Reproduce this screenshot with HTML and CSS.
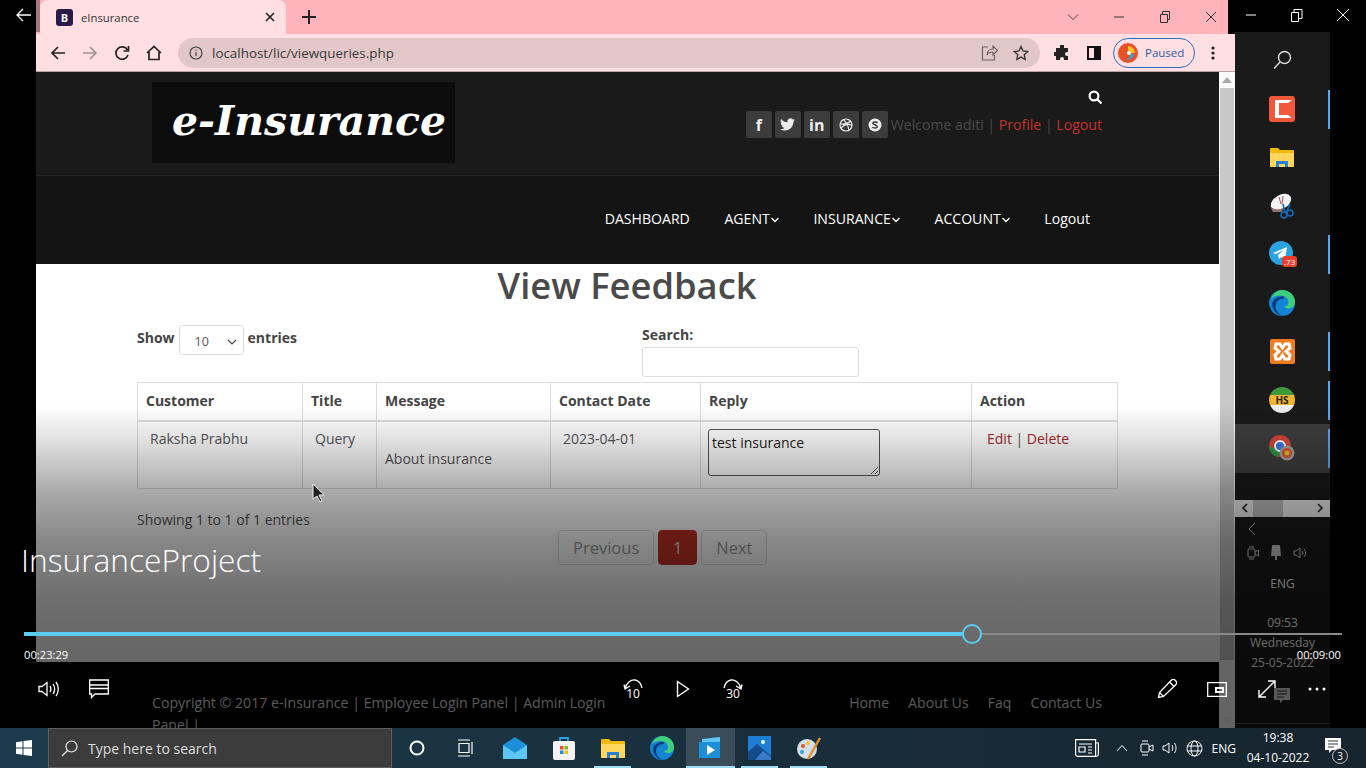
FILE: index.html
```html
<!DOCTYPE html>
<html lang="en">

<head>
    <meta charset="UTF-8">
    <meta name="viewport" content="width=device-width, initial-scale=1.0">
    <title>eInsurance</title>
    <link rel="stylesheet" href="styles.css">
</head>

<body>
    <svg class="defs" width="0" height="0">
        <symbol id="folder" viewBox="0 0 24 20">
            <path fill="#f2b90f" d="M0 2a1 1 0 0 1 1-1h7l2 2h13a1 1 0 0 1 1 1v15a1 1 0 0 1-1 1H1a1 1 0 0 1-1-1z" />
            <path fill="#ffd75e" d="M0 6h24v13a1 1 0 0 1-1 1H1a1 1 0 0 1-1-1z" />
            <path fill="#2a80d2" d="M6 14h12v6h-3v-3H9v3H6z" />
        </symbol>
        <symbol id="edge" viewBox="0 0 24 24">
            <circle cx="12" cy="12" r="12" fill="#1383d4" />
            <path fill="#3fcf7c" d="M2 8C4 2 9 0 12 0c7 0 12 5 12 11 0 4-3 6-6 6-2 0-4-1-4-2 3 0 4-2 4-4 0-3-3-6-7-6-4 0-7 1-9 3z" />
            <path fill="#0c3a78" d="M13 8c-4 0-7 3-7 7 0 4 3 8 8 9-5 0-11-4-11-11 0-3 4-7 9-7 2 0 3 1 1 2z" />
        </symbol>
    </svg>

    <div class="screen">
        <div class="desktop">
            <div class="gutter">
                <svg class="ico" width="16" height="16" viewBox="0 0 16 16" fill="none" stroke="#fff" stroke-width="1.3">
                    <path d="M15 8H1M7 2 1 8l6 6" />
                </svg>
            </div>

            <div class="browser">
                <div class="tabstrip">
                    <div class="tab-edge"></div>
                    <div class="tab">
                        <span class="favicon">B</span>
                        <span class="tab-title">eInsurance</span>
                        <svg class="tab-close" width="10" height="10" viewBox="0 0 10 10" stroke="#222" stroke-width="1.6">
                            <path d="M1 1l8 8M9 1 1 9" />
                        </svg>
                    </div>
                    <svg class="tab-new" width="14" height="14" viewBox="0 0 14 14" stroke="#222" stroke-width="2">
                        <path d="M7 0v14M0 7h14" />
                    </svg>
                    <div class="win-btns">
                        <svg class="win-btn" width="12" height="12" viewBox="0 0 12 12" fill="none" stroke="#444">
                            <path d="M1 3.5 6 8.5l5-5" />
                        </svg>
                        <svg class="win-btn" width="12" height="12" viewBox="0 0 12 12" stroke="#333">
                            <path d="M1 6h10" />
                        </svg>
                        <svg class="win-btn" width="12" height="12" viewBox="0 0 12 12" fill="none" stroke="#333">
                            <path d="M1.5 3.5h7v8h-7zM3.5 3.5v-3h7v8h-2" />
                        </svg>
                        <svg class="win-btn" width="12" height="12" viewBox="0 0 12 12" stroke="#333">
                            <path d="M1 1l10 10M11 1 1 11" />
                        </svg>
                    </div>
                </div>

                <div class="toolbar">
                    <div class="tool">
                        <svg width="16" height="16" viewBox="0 0 16 16" fill="none" stroke="#222" stroke-width="1.7">
                            <path d="M15 8H2M8 2 2 8l6 6" />
                        </svg>
                    </div>
                    <div class="tool">
                        <svg width="16" height="16" viewBox="0 0 16 16" fill="none" stroke="#a88f91" stroke-width="1.7">
                            <path d="M1 8h13M8 2l6 6-6 6" />
                        </svg>
                    </div>
                    <div class="tool">
                        <svg width="16" height="16" viewBox="0 0 16 16" fill="none" stroke="#222" stroke-width="1.7">
                            <path d="M13.5 5A6.2 6.2 0 1 0 14 10" />
                            <path d="M14.5 1v5h-5" />
                        </svg>
                    </div>
                    <div class="tool">
                        <svg width="16" height="16" viewBox="0 0 16 16" fill="none" stroke="#222" stroke-width="1.7">
                            <path d="M1 8l7-6.5L15 8M3 7v7.5h10V7" />
                        </svg>
                    </div>
                    <div class="omnibox">
                        <svg width="14" height="14" viewBox="0 0 14 14" fill="none" stroke="#444" stroke-width="1.2">
                            <circle cx="7" cy="7" r="6" />
                            <path d="M7 6v4.2M7 3.5v1.3" />
                        </svg>
                        <span class="url">localhost/lic/viewqueries.php</span>
                        <svg class="omni-share" width="17" height="17" viewBox="0 0 17 17" fill="none" stroke="#6f6365" stroke-width="1.2">
                            <path d="M7 3H1.5v13h12v-5M6 11c0-4 3-6 6-6V2l4.500 4.500L12 11V8c-3 0-5 1-6 3z" />
                        </svg>
                        <svg width="16" height="16" viewBox="0 0 16 16" fill="none" stroke="#333" stroke-width="1.3">
                            <path d="M8 1.500l2 4.500 4.800.5-3.600 3.200 1 4.800L8 12.100 3.800 14.500l1-4.800L1.200 6.500 6 6z" />
                        </svg>
                    </div>
                    <div class="tool tool-ext">
                        <svg width="16" height="16" viewBox="0 0 16 16" fill="#222">
                            <path d="M6 1a2 2 0 0 1 4 0v2h4v4h-1a2 2 0 0 0 0 4h1v4h-4v-1a2 2 0 0 0-4 0v1H2v-4H1a2 2 0 0 1 0-4h1V3h4z" />
                        </svg>
                    </div>
                    <div class="tool">
                        <svg width="14" height="14" viewBox="0 0 14 14">
                            <path fill-rule="evenodd" fill="#111" d="M0 0h14v14H0zM2 2v10h5V2z" />
                        </svg>
                    </div>
                    <div class="profile">
                        <svg width="20" height="20" viewBox="0 0 20 20">
                            <circle cx="10" cy="10" r="10" fill="#e8502a" />
                            <path fill="#f7c325" d="M10 3a7 7 0 0 1 7 7h-5a2 2 0 0 0-2-2z" />
                            <path fill="#35a0d8" d="M12 11a4 4 0 0 1-5 5c3 2 8 0 9-5z" />
                            <circle cx="11" cy="10" r="2" fill="#fff" />
                        </svg>
                        <span>Paused</span>
                    </div>
                    <div class="tool tool-menu">
                        <svg width="4" height="14" viewBox="0 0 4 14" fill="#222">
                            <circle cx="2" cy="2" r="1.600" />
                            <circle cx="2" cy="7" r="1.600" />
                            <circle cx="2" cy="12" r="1.600" />
                        </svg>
                    </div>
                </div>

                <div class="viewport">
                    <div class="page">
                        <header class="site-top">
                            <div class="logo">e-Insurance</div>
                            <div class="top-right">
                                <svg class="top-search" width="14" height="14" viewBox="0 0 14 14" fill="none" stroke="#fff" stroke-width="2.200">
                                    <circle cx="6" cy="6" r="4.400" />
                                    <path d="M9 9l4.500 4.500" />
                                </svg>
                                <div class="top-links">
                                    <span class="social"><b>f</b></span>
                                    <span class="social">
                                        <svg width="15" height="15" viewBox="0 0 24 24" fill="#eee">
                                            <path d="M23.953 4.570a10 10 0 01-2.825.775 4.958 4.958 0 002.163-2.723c-.951.555-2.005.959-3.127 1.184a4.920 4.920 0 00-8.384 4.482C7.690 8.095 4.067 6.130 1.640 3.162a4.822 4.822 0 00-.666 2.475c0 1.710.870 3.213 2.188 4.096a4.904 4.904 0 01-2.228-.616v.060a4.923 4.923 0 003.946 4.827 4.996 4.996 0 01-2.212.085 4.936 4.936 0 004.604 3.417 9.867 9.867 0 01-6.102 2.105c-.390 0-.779-.023-1.170-.067a13.995 13.995 0 007.557 2.209c9.053 0 13.998-7.496 13.998-13.985 0-.210 0-.420-.015-.630A9.935 9.935 0 0024 4.590z" />
                                        </svg>
                                    </span>
                                    <span class="social"><b>in</b></span>
                                    <span class="social">
                                        <svg width="14" height="14" viewBox="0 0 14 14" fill="none" stroke="#eee" stroke-width="1.200">
                                            <circle cx="7" cy="7" r="6" />
                                            <path d="M4.500 1.600c3 3 5 7 5.500 10.800M1.200 6c4 .3 8-.6 10.300-3M2 10.500c2-3 6-5 11-3.500" />
                                        </svg>
                                    </span>
                                    <span class="social">
                                        <svg width="14" height="14" viewBox="0 0 14 14">
                                            <circle cx="7" cy="7" r="6.500" fill="#eee" />
                                            <path d="M9.500 5C9 3.800 5 3.500 4.800 5.200 4.700 7 9.500 6.600 9.300 8.800 9 10.500 5 10.300 4.300 9" fill="none" stroke="#333" stroke-width="1.400" />
                                        </svg>
                                    </span>
                                    <span class="welcome">Welcome aditi | <a class="red">Profile</a> | <a class="red">Logout</a></span>
                                </div>
                            </div>
                        </header>

                        <nav class="site-nav">
                            <a>DASHBOARD</a>
                            <a>AGENT<svg class="caret" width="8" height="6" viewBox="0 0 8 6" fill="none" stroke="#fff" stroke-width="1.300"><path d="M.5 1 4 4.500 7.500 1" /></svg></a>
                            <a>INSURANCE<svg class="caret" width="8" height="6" viewBox="0 0 8 6" fill="none" stroke="#fff" stroke-width="1.300"><path d="M.5 1 4 4.500 7.500 1" /></svg></a>
                            <a>ACCOUNT<svg class="caret" width="8" height="6" viewBox="0 0 8 6" fill="none" stroke="#fff" stroke-width="1.300"><path d="M.5 1 4 4.500 7.500 1" /></svg></a>
                            <a>Logout</a>
                        </nav>

                        <main class="content">
                            <h1>View Feedback</h1>
                            <div class="dt-top">
                                <label class="dt-length">Show
                                    <span class="fake-select">10
                                        <svg width="10" height="6" viewBox="0 0 10 6" fill="none" stroke="#444" stroke-width="1.200"><path d="M1 1l4 4 4-4" /></svg>
                                    </span>
                                    entries</label>
                                <label class="dt-search">Search:
                                    <input type="text">
                                </label>
                            </div>

                            <table class="dt">
                                <colgroup>
                                    <col class="c-customer">
                                    <col class="c-title">
                                    <col class="c-message">
                                    <col class="c-date">
                                    <col class="c-reply">
                                    <col class="c-action">
                                </colgroup>
                                <thead>
                                    <tr>
                                        <th>Customer</th>
                                        <th>Title</th>
                                        <th>Message</th>
                                        <th>Contact Date</th>
                                        <th>Reply</th>
                                        <th>Action</th>
                                    </tr>
                                </thead>
                                <tbody>
                                    <tr>
                                        <td>Raksha Prabhu</td>
                                        <td>Query</td>
                                        <td class="td-msg"><br>About insurance</td>
                                        <td>2023-04-01</td>
                                        <td class="td-reply"><textarea>test insurance</textarea></td>
                                        <td class="td-action"><a class="red">Edit</a> | <a class="red">Delete</a></td>
                                    </tr>
                                </tbody>
                            </table>

                            <div class="dt-info">Showing 1 to 1 of 1 entries</div>
                            <div class="pager">
                                <span class="pg">Previous</span>
                                <span class="pg pg-on">1</span>
                                <span class="pg">Next</span>
                            </div>
                        </main>

                        <footer class="site-foot">
                            <div class="copy">Copyright © 2017 e-Insurance | Employee Login Panel | Admin Login Panel |</div>
                            <div class="foot-links">
                                <a>Home</a>
                                <a>About Us</a>
                                <a>Faq</a>
                                <a>Contact Us</a>
                            </div>
                        </footer>
                    </div>

                    <div class="scrollbar">
                        <div class="sb-btn">
                            <svg width="10" height="6" viewBox="0 0 10 6" fill="#a8a8a8"><path d="M5 0l5 6H0z" /></svg>
                        </div>
                        <div class="sb-thumb"></div>
                        <div class="sb-track"></div>
                        <div class="sb-btn">
                            <svg width="10" height="6" viewBox="0 0 10 6" fill="#eee"><path d="M5 6 0 0h10z" /></svg>
                        </div>
                    </div>
                </div>
            </div>

            <div class="side">
                <div class="side-top">
                    <svg class="side-btn" width="14" height="14" viewBox="0 0 14 14" stroke="#fff"><path d="M2 7h10" /></svg>
                    <svg class="side-btn" width="14" height="14" viewBox="0 0 14 14" fill="none" stroke="#fff"><path d="M1.500 4.500h7v9h-7zM4 4.500v-3h8v9H8.500" /></svg>
                    <svg class="side-btn" width="14" height="14" viewBox="0 0 14 14" stroke="#fff"><path d="M1 1l12 12M13 1 1 13" /></svg>
                </div>
                <div class="panel">
                    <div class="app">
                        <svg width="20" height="20" viewBox="0 0 20 20" fill="none" stroke="#ddd" stroke-width="1.400">
                            <circle cx="12.500" cy="7.500" r="6" />
                            <path d="M8 12l-6 6.500" />
                        </svg>
                    </div>
                    <div class="app app-open">
                        <svg width="26" height="26" viewBox="0 0 26 26">
                            <rect width="26" height="26" rx="3" fill="#f2573b" />
                            <path fill="#fff" d="M6 4h17l-4 3h-9v12h9l4 3H6z" />
                        </svg>
                    </div>
                    <div class="app"><svg width="24" height="20"><use href="#folder" /></svg></div>
                    <div class="app">
                        <svg width="24" height="26" viewBox="0 0 24 26">
                            <ellipse cx="11" cy="9" rx="11" ry="7" fill="#f3f3f3" transform="rotate(-30 11 9)" />
                            <path d="M0 13c3 4 9 4 13 2l-1 4H3z" fill="#8a7474" />
                            <path d="M9 4l2 7M13 3l-1 8" stroke="#b05050" />
                            <path d="M13 11l2 9M20 11l-4 9" stroke="#0f6cc0" stroke-width="1.600" />
                            <circle cx="14" cy="22" r="3" fill="none" stroke="#0f6cc0" stroke-width="1.600" />
                            <circle cx="20" cy="20" r="3" fill="none" stroke="#0f6cc0" stroke-width="1.600" />
                        </svg>
                    </div>
                    <div class="app app-open">
                        <svg width="26" height="26" viewBox="0 0 26 26">
                            <circle cx="12" cy="12" r="12" fill="#2aa3e0" />
                            <path fill="#fff" d="M4 12l14-6-2 13-4-3-2 2-1-4 6-5-8 4z" />
                        </svg>
                        <span class="count">.73</span>
                    </div>
                    <div class="app"><svg width="26" height="26"><use href="#edge" /></svg></div>
                    <div class="app app-open">
                        <svg width="25" height="25" viewBox="0 0 25 25">
                            <rect width="25" height="25" rx="2" fill="#ee7d22" />
                            <path fill="none" stroke="#fff" stroke-width="3" d="M6 5h4l2.500 4L15 5h4l1 4-4 3.500 4 3.500-1 4h-4l-2.500-4-2.500 4H6l-1-4 4-3.500L5 9z" />
                        </svg>
                    </div>
                    <div class="app app-open">
                        <span class="hs">HS</span>
                    </div>
                    <div class="app app-open app-active">
                        <svg width="26" height="26" viewBox="0 0 26 26">
                            <circle cx="11" cy="11" r="11" fill="#d8453a" />
                            <path fill="#2c9a4b" d="M0 11a11 11 0 0 0 9 11l4-8H6z" />
                            <circle cx="11" cy="11" r="5" fill="#3b78e0" stroke="#fff" stroke-width="2" />
                            <circle cx="18" cy="18" r="7.500" fill="#a9a29e" />
                            <circle cx="18" cy="18" r="5" fill="#d8553a" />
                            <circle cx="18" cy="18" r="2.500" fill="#e7c12f" />
                        </svg>
                    </div>
                    <div class="panel-gap"></div>
                    <div class="panel-scroll">
                        <svg width="7" height="10" viewBox="0 0 7 10" fill="none" stroke="#222" stroke-width="1.600"><path d="M6 1 2 5l4 4" /></svg>
                        <div class="panel-thumb"></div>
                        <svg class="panel-next" width="7" height="10" viewBox="0 0 7 10" fill="none" stroke="#222" stroke-width="1.600"><path d="M1 1l4 4-4 4" /></svg>
                    </div>
                    <div class="sys">
                        <svg class="sys-back" width="8" height="14" viewBox="0 0 8 14" fill="none" stroke="#ccc"><path d="M7 1 1 7l6 6" /></svg>
                        <div class="sys-icons">
                            <svg width="12" height="16" viewBox="0 0 12 16" fill="none" stroke="#ccc"><rect x="1" y="4" width="7" height="8" rx="1" /><path d="M8 7l3.500-2v6L8 9M2 2h5M2 14h5" /></svg>
                            <svg width="12" height="15" viewBox="0 0 12 15" fill="#ccc"><path d="M3 0h6a1 1 0 0 1 1 1l1 10H1L2 1a1 1 0 0 1 1-1zM5 11h2v4H5z" /></svg>
                            <svg width="15" height="14" viewBox="0 0 15 14" fill="none" stroke="#ccc"><path d="M1 5v4h2l4 3V2L3 5zM9 5c1 1 1 3 0 4M11 3c2 2 2 6 0 8" /></svg>
                        </div>
                        <div class="sys-eng">ENG</div>
                        <div class="sys-time">09:53</div>
                        <div class="sys-day">Wednesday</div>
                        <div class="sys-day">25-05-2022</div>
                        <svg class="sys-note" width="18" height="18" viewBox="0 0 18 18">
                            <path fill="#ddd" d="M0 0h16v12H9l-3 3v-3H0z" />
                            <path stroke="#333" d="M3 3h10M3 6h10M3 9h7" />
                        </svg>
                        <div class="sys-line"></div>
                    </div>
                </div>
            </div>
        </div>

        <div class="taskbar">
            <div class="start">
                <svg width="16" height="16" viewBox="0 0 16 16" fill="#fff">
                    <path d="M0 2.200 6.500 1.300v6.200H0zM7.500 1.100 16 0v7.500H7.500zM0 8.500h6.500v6.200L0 13.800zM7.500 8.500H16V16l-8.500-1.100z" />
                </svg>
            </div>
            <div class="task-search">
                <svg width="17" height="17" viewBox="0 0 17 17" fill="none" stroke="#eee" stroke-width="1.200">
                    <circle cx="10.500" cy="6.500" r="5.500" />
                    <path d="M6.500 10.500 1 16" />
                </svg>
                <span>Type here to search</span>
            </div>
            <div class="task-icons">
                <div class="task-ico">
                    <svg width="16" height="16" viewBox="0 0 16 16" fill="none" stroke="#fff" stroke-width="2"><circle cx="8" cy="8" r="6.500" /></svg>
                </div>
                <div class="task-ico">
                    <svg width="18" height="18" viewBox="0 0 18 18" fill="none" stroke="#fff" stroke-width="1.200">
                        <path d="M1 1h12M1 17h12M2 4.500h10v9H2zM15 3v12" />
                    </svg>
                </div>
                <div class="task-ico">
                    <svg width="24" height="22" viewBox="0 0 24 22">
                        <path fill="#1c8fd8" d="M0 8l12-8 12 8v14H0z" />
                        <path fill="#5cc6f5" d="M0 8l12 8 12-8v14H0z" />
                    </svg>
                </div>
                <div class="task-ico">
                    <svg width="22" height="24" viewBox="0 0 22 24">
                        <path fill="none" stroke="#2aa3e0" stroke-width="1.800" d="M7 6V2h8v4" />
                        <rect y="5" width="22" height="19" rx="2" fill="#f3f3f3" />
                        <path fill="#e8502a" d="M7 10h3.500v3.500H7z" />
                        <path fill="#7db922" d="M11.500 10H15v3.500h-3.500z" />
                        <path fill="#1c8fd8" d="M7 14.500h3.500V18H7z" />
                        <path fill="#f7b90f" d="M11.500 14.500H15V18h-3.500z" />
                    </svg>
                </div>
                <div class="task-ico task-run"><svg width="24" height="20"><use href="#folder" /></svg></div>
                <div class="task-ico"><svg width="24" height="24"><use href="#edge" /></svg></div>
                <div class="task-ico task-run task-cur">
                    <svg width="24" height="24" viewBox="0 0 24 24">
                        <path fill="#1c8fd8" d="M0 6h21v16H0z" />
                        <path fill="#5cc6f5" d="M3 3l18-2v5H3z" />
                        <path fill="#fff" d="M8 9l8 5-8 5z" />
                    </svg>
                </div>
                <div class="task-ico task-run">
                    <svg width="23" height="24" viewBox="0 0 23 24">
                        <rect width="23" height="24" fill="#1e7fd2" />
                        <path fill="#154a8c" d="M0 24V16l9-8 14 12v4z" />
                        <path fill="#3a7ac8" d="M7 24 15 15l8 6v3z" />
                        <circle cx="15" cy="6" r="2" fill="#dff" />
                    </svg>
                </div>
                <div class="task-ico task-run">
                    <svg width="26" height="26" viewBox="0 0 26 26">
                        <ellipse cx="11" cy="14" rx="10" ry="10" fill="#d5dfe8" />
                        <circle cx="7" cy="11" r="2" fill="#e8502a" />
                        <circle cx="12" cy="8" r="2" fill="#f7c325" />
                        <circle cx="6" cy="17" r="2" fill="#2aa3e0" />
                        <path stroke="#e0902a" stroke-width="2.400" d="M12 24 24 3" />
                    </svg>
                </div>
            </div>
            <div class="tray">
                <svg class="tray-news" width="24" height="18" viewBox="0 0 24 18" fill="none" stroke="#fff" stroke-width="1.200">
                    <path d="M.6.600h20v16.800H3a2.400 2.400 0 0 1-2.400-2.400zM21 4h2.400v11a2.400 2.400 0 0 1-2.400 2.400" />
                    <path d="M4 5h13M4 8h6v5H4zM13 8h4M13 11h4M13 14h4" />
                </svg>
                <svg class="tray-up" width="12" height="8" viewBox="0 0 12 8" fill="none" stroke="#fff"><path d="M1 7l5-5.500L11 7" /></svg>
                <svg class="tray-meet" width="14" height="18" viewBox="0 0 14 18" fill="none" stroke="#fff"><rect x="1" y="5" width="8" height="8" rx="1" /><path d="M9 8l4-2v6l-4-2M2 2h6M2 16h6" /></svg>
                <svg class="tray-i" width="17" height="16" viewBox="0 0 17 16" fill="none" stroke="#fff"><path d="M1 6v4h2l4 3V3L3 6zM10 5c1 2 1 4 0 6M12.500 3c2 3 2 7 0 10" /></svg>
                <svg class="tray-globe" width="17" height="17" viewBox="0 0 17 17" fill="none" stroke="#fff"><circle cx="8.500" cy="8.500" r="7.500" /><ellipse cx="8.500" cy="8.500" rx="3.500" ry="7.500" /><path d="M1 6h15M1 11h15" /></svg>
                <span class="tray-lang">ENG</span>
                <div class="clock">
                    <span>19:38</span>
                    <span>04-10-2022</span>
                </div>
                <div class="notif">
                    <svg width="16" height="16" viewBox="0 0 16 16"><path fill="#fff" d="M0 0h16v12H7l-3 3v-3H0z" /><path stroke="#333" d="M3 3h10M3 6h10M3 9h6" /></svg>
                    <span class="notif-n">3</span>
                </div>
            </div>
        </div>

        <div class="player">
            <div class="player-title">InsuranceProject</div>
            <div class="progress">
                <div class="progress-fill" style="width: 948px"></div>
                <div class="progress-knob" style="left: 938px"></div>
            </div>
            <div class="times">
                <span>00:23:29</span>
                <span>00:09:00</span>
            </div>
            <div class="controls">
                <div class="ctl-group">
                    <div class="ctl">
                        <svg width="22" height="18" viewBox="0 0 22 18" fill="none" stroke="#fff" stroke-width="1.300">
                            <path d="M1 6.500v5h3l5 4V2.500l-5 4zM12 6c1.200 2 1.200 4 0 6M15 4c2 3 2 7 0 10M18 2c3 4 3 10 0 14" />
                        </svg>
                    </div>
                    <div class="ctl">
                        <svg width="20" height="20" viewBox="0 0 20 20" fill="none" stroke="#fff" stroke-width="1.300">
                            <path d="M.7 1h18.600v14H6l-3.500 3.500V15H.7z" />
                            <path d="M1 6h18M1 9.500h18" />
                        </svg>
                    </div>
                </div>
                <div class="ctl-group ctl-mid">
                    <div class="ctl">
                        <svg width="20" height="12" viewBox="0 0 20 12" fill="none" stroke="#fff" stroke-width="1.300">
                            <path d="M2 11C3 5 8 1.500 12 2c3 .5 6 3 7 8M1 6.500 2 11l5-3" />
                        </svg>
                        <span class="ctl-num">10</span>
                    </div>
                    <div class="ctl">
                        <svg width="14" height="18" viewBox="0 0 14 18" fill="none" stroke="#fff" stroke-width="1.400"><path d="M1.500 1.500v15l11-7.500z" /></svg>
                    </div>
                    <div class="ctl">
                        <svg width="20" height="12" viewBox="0 0 20 12" fill="none" stroke="#fff" stroke-width="1.300">
                            <path d="M18 11C17 5 12 1.500 8 2c-3 .5-6 3-7 8M19 6.500 18 11l-5-3" />
                        </svg>
                        <span class="ctl-num">30</span>
                    </div>
                </div>
                <div class="ctl-group ctl-right">
                    <div class="ctl">
                        <svg width="20" height="20" viewBox="0 0 20 20" fill="none" stroke="#fff" stroke-width="1.300">
                            <path d="M1.500 18.500l1-5L14 1.500a2 2 0 0 1 4.500 4.500L6.500 17.500zM2.500 13.500l4 4M12.500 3l4.500 4.500" />
                        </svg>
                    </div>
                    <div class="ctl">
                        <svg width="20" height="15" viewBox="0 0 20 15" fill="none" stroke="#fff" stroke-width="1.300">
                            <path d="M.7.700h18.600v13.600H.7z" />
                            <path stroke-width="2" d="M9 6h7v4H9z" />
                        </svg>
                    </div>
                    <div class="ctl">
                        <svg width="20" height="20" viewBox="0 0 20 20" fill="none" stroke="#fff" stroke-width="1.400">
                            <path d="M2 18 18 2M11 2h7v7M2 11v7h7" />
                        </svg>
                    </div>
                    <div class="ctl">
                        <svg width="18" height="4" viewBox="0 0 18 4" fill="#fff">
                            <circle cx="2" cy="2" r="1.500" />
                            <circle cx="9" cy="2" r="1.500" />
                            <circle cx="16" cy="2" r="1.500" />
                        </svg>
                    </div>
                </div>
            </div>
        </div>

        <svg class="cursor" width="14" height="20" viewBox="0 0 14 20">
            <path fill="#222" stroke="#eee" d="M1 1v15l4-3 3 6 2-1-3-6h5z" />
        </svg>
    </div>
</body>

</html>
```

FILE: styles.css
```css
* {
    box-sizing: border-box;
}

html, body {
    margin: 0;
    background: #000;
}

.defs {
    position: absolute;
}

.screen {
    position: relative;
    width: 1366px;
    height: 768px;
    overflow: hidden;
    display: flex;
    flex-direction: column;
    font-family: "Open Sans", sans-serif;
    font-size: 14px;
}

.desktop {
    display: flex;
    height: 728px;
}

.gutter {
    width: 36px;
    padding: 7px 0 0 16px;
}

/* browser window */
.browser {
    width: 1199px;
    display: flex;
    flex-direction: column;
}

.tabstrip {
    width: 1192px;
    height: 34px;
    flex: none;
    display: flex;
    align-items: center;
    background: #ffb3ba;
}

.tab-edge {
    width: 4px;
    height: 32px;
    align-self: flex-start;
    background: #a5797d;
}

.tab {
    width: 246px;
    height: 34px;
    display: flex;
    align-items: center;
    padding: 0 10px 0 16px;
    background: #ffdfe1;
    border-radius: 8px 8px 0 0;
    font-size: 11.300px;
    color: #333;
}

.favicon {
    width: 17px;
    height: 17px;
    margin-right: 8px;
    border-radius: 3px;
    background: #2a1a4a;
    color: #fff;
    font-size: 11px;
    font-weight: 700;
    line-height: 17px;
    text-align: center;
}

.tab-title {
    flex: 1;
}

.tab-close {
    margin-right: 1px;
}

.tab-new {
    margin-left: 16px;
}

.win-btns {
    display: flex;
    margin-left: auto;
    margin-right: 11px;
}

.win-btn {
    margin-left: 34px;
}

.toolbar {
    height: 38px;
    flex: none;
    display: flex;
    align-items: center;
    padding-left: 6px;
    background: #ffdfe1;
    border-bottom: 1px solid #b9a2a4;
}

.tool {
    width: 32px;
    height: 30px;
    display: flex;
    align-items: center;
    justify-content: center;
}

.tool-ext {
    margin-left: 6px;
}

.tool-menu {
    margin-left: 2px;
}

.omnibox {
    width: 862px;
    height: 30px;
    margin-left: 8px;
    padding: 0 11px;
    display: flex;
    align-items: center;
    background: #e2c7c9;
    border-radius: 15px;
}

.url {
    flex: 1;
    margin-left: 9px;
    font-size: 13.400px;
    color: #3a3a3a;
}

.omni-share {
    margin-right: 15px;
}

.profile {
    width: 82px;
    height: 30px;
    margin-left: 3px;
    padding-left: 4px;
    display: flex;
    align-items: center;
    gap: 7px;
    border: 1.500px solid #2f6fc0;
    border-radius: 15px;
    font-size: 11.500px;
    color: #2c5c9c;
}

.viewport {
    height: 656px;
    display: flex;
}

.scrollbar {
    width: 16px;
    display: flex;
    flex-direction: column;
    background: #fafafa;
}

.sb-btn {
    height: 16px;
    flex: none;
    display: flex;
    align-items: center;
    justify-content: center;
}

.sb-thumb {
    height: 572px;
    margin: 0 1px;
    background: #c8c8c8;
}

.sb-track {
    flex: 1;
}

/* the site inside the browser */
.page {
    width: 1183px;
    height: 656px;
    overflow: hidden;
    background: #fff;
}

.site-top {
    height: 104px;
    padding: 10px 117px 0 116px;
    display: flex;
    justify-content: space-between;
    background: #1a1a1a;
    border-bottom: 1px solid #242424;
}

.logo {
    width: 303px;
    height: 81px;
    padding-left: 20px;
    background: #0c0c0c;
    color: #fff;
    font-family: "DejaVu Serif", serif;
    font-size: 41px;
    font-style: italic;
    font-weight: 700;
    line-height: 78px;
    white-space: nowrap;
}

.top-right {
    display: flex;
    flex-direction: column;
    align-items: flex-end;
}

.top-search {
    margin-top: 8px;
}

.top-links {
    margin-top: 7px;
    display: flex;
    align-items: center;
    gap: 3px;
}

.social {
    width: 26px;
    height: 27px;
    display: flex;
    align-items: center;
    justify-content: center;
    background: #3c3c3c;
    border-radius: 2px;
    color: #eee;
    font-size: 16px;
}

.welcome {
    font-size: 14.100px;
    color: #4a4a4a;
}

.red {
    color: #a52a2a;
}

.welcome .red {
    color: #c8322c;
}

.site-nav {
    height: 88px;
    padding: 0 129px 4px 0;
    display: flex;
    align-items: center;
    justify-content: flex-end;
    gap: 34.600px;
    background: #141414;
    color: #fff;
    font-size: 14.100px;
}

.caret {
    margin-left: 1px;
    vertical-align: 1px;
}

.content {
    height: 398px;
    padding: 0 102px 0 101px;
    color: #555;
}

h1 {
    margin: 0;
    height: 42px;
    font-size: 36.300px;
    line-height: 42px;
    font-weight: 600;
    text-align: center;
    color: #4a4a4a;
}

.dt-top {
    height: 76px;
    display: flex;
    font-weight: 700;
    color: #444;
}

.dt-length {
    width: 505px;
    height: 48px;
    padding-top: 19px;
    display: flex;
    align-items: flex-start;
    gap: 4px;
    line-height: 26px;
}

.fake-select {
    width: 65px;
    height: 30px;
    padding: 3px 6px 0 15px;
    display: flex;
    align-items: center;
    justify-content: space-between;
    background: #fff;
    border: 1px solid #ddd;
    border-radius: 3px;
    font-size: 12.500px;
    font-weight: 400;
    color: #555;
}

.dt-search {
    display: flex;
    flex-direction: column;
    padding-top: 17px;
    line-height: 24px;
}

.dt-search input {
    width: 217px;
    height: 30px;
    border: 1px solid #ddd;
    border-radius: 3px;
    background: #fff;
}

.dt {
    width: 980px;
    table-layout: fixed;
    border-collapse: collapse;
    border: 1px solid #ddd;
}

.c-customer { width: 165px; }
.c-title { width: 74px; }
.c-message { width: 174px; }
.c-date { width: 150px; }
.c-reply { width: 271px; }
.c-action { width: 146px; }

.dt th, .dt td {
    border: 1px solid #ddd;
    text-align: left;
    vertical-align: top;
}

.dt th {
    height: 38px;
    padding: 7px 8px;
    border-bottom-width: 2px;
    color: #444;
    line-height: 21px;
}

.dt td {
    height: 68px;
    padding: 7px 12px;
    line-height: 20.500px;
}

.dt .td-msg {
    padding-left: 8px;
}

.dt .td-reply {
    padding: 7px 7px;
}

.dt .td-action {
    padding-left: 15px;
}

textarea {
    display: block;
    width: 172px;
    height: 47px;
    padding: 3px;
    margin: 0;
    border: 1px solid #555;
    border-radius: 3px;
    font-family: "Open Sans", sans-serif;
    font-size: 14px;
    color: #222;
    background: #fff;
}

.dt-info {
    height: 41px;
    padding-top: 21px;
    line-height: 19px;
}

.pager {
    display: flex;
    gap: 4px;
    margin-left: 421px;
}

.pg {
    height: 35px;
    padding: 0 14px;
    line-height: 33px;
    font-size: 16.500px;
    color: #999;
    border: 1px solid #ddd;
    border-radius: 4px;
    background: #fff;
}

.pager .pg-on {
    width: 39px;
    padding: 0;
    text-align: center;
    background: #c03026;
    border-color: #c03026;
    color: #ddd;
}

.site-foot {
    height: 66px;
    padding: 30px 117px 0 116px;
    display: flex;
    justify-content: space-between;
    background: #000;
    color: #ddd;
    font-size: 14.150px;
    line-height: 22px;
}

.copy {
    width: 470px;
}

.foot-links {
    display: flex;
    gap: 19px;
}

/* panel right of the browser */
.side {
    width: 131px;
    flex: none;
}

.side-top {
    height: 32px;
    margin-left: -7px;
    display: flex;
}

.side-btn {
    width: 46px;
    height: 14px;
    margin-top: 8px;
}

.panel {
    width: 95px;
    height: 696px;
    padding-top: 4px;
    display: flex;
    flex-direction: column;
    background: #1a1a1a;
}

.app {
    position: relative;
    height: 48.500px;
    flex: none;
    display: flex;
    align-items: center;
    justify-content: center;
    padding-right: 1px;
}

.app-open::after {
    content: "";
    position: absolute;
    right: 0;
    top: 5px;
    width: 2px;
    height: 39px;
    background: #5aa9f0;
}

.app-active {
    background: #3e3e3e;
}

.count {
    position: absolute;
    left: 47px;
    top: 26px;
    padding: 0 2px;
    border-radius: 3px;
    background: #e8402e;
    color: #fff;
    font-size: 8px;
    line-height: 11px;
}

.hs {
    width: 26px;
    height: 26px;
    border-radius: 50%;
    background: linear-gradient(#3c9a3c 30%, #f2b530 30%, #f2b530 70%, #eee 70%);
    color: #222;
    font-size: 10px;
    font-weight: 700;
    line-height: 26px;
    text-align: center;
}

.panel-gap {
    height: 27px;
    flex: none;
}

.panel-scroll {
    height: 17px;
    flex: none;
    padding-left: 6px;
    display: flex;
    align-items: center;
    background: #f1f1f1;
}

.panel-thumb {
    width: 30px;
    height: 17px;
    margin-left: 5px;
    background: #c1c1c1;
}

.panel-next {
    margin-left: auto;
    margin-right: 6px;
}

.sys {
    flex: 1;
    display: flex;
    flex-direction: column;
    align-items: center;
    color: #fff;
    font-size: 12px;
}

.sys-back {
    align-self: flex-start;
    margin: 5px 0 0 13px;
}

.sys-icons {
    align-self: flex-start;
    margin: 9px 0 0 12px;
    display: flex;
    align-items: center;
    gap: 11px;
}

.sys-eng {
    margin-top: 14px;
}

.sys-time {
    margin-top: 22px;
}

.sys-day {
    margin-top: 3px;
    line-height: 17px;
}

.sys-note {
    margin-top: 17px;
}

.sys-line {
    width: 100%;
    height: 1px;
    margin-top: 17px;
    background: #555;
}

/* taskbar */
.taskbar {
    position: relative;
    height: 40px;
    display: flex;
    align-items: center;
    background: linear-gradient(90deg, #1d3b4c, #16242e);
    color: #fff;
    font-size: 12px;
}

.start {
    width: 48px;
    display: flex;
    justify-content: center;
}

.task-search {
    width: 344px;
    height: 40px;
    padding-left: 12px;
    display: flex;
    align-items: center;
    gap: 10px;
    background: #3c3c3c;
    border: 1px solid #5f5f5f;
    font-size: 14px;
    color: #ddd;
}

.task-icons {
    display: flex;
}

.task-ico {
    position: relative;
    width: 49px;
    height: 40px;
    display: flex;
    align-items: center;
    justify-content: center;
}

.task-run::after {
    content: "";
    position: absolute;
    left: 6px;
    right: 6px;
    bottom: 0;
    height: 2px;
    background: #9fdcf5;
}

.task-cur {
    background: #3a4c58;
}

.task-cur::after {
    left: 0;
    right: 0;
}

.tray {
    margin-left: auto;
    display: flex;
    align-items: center;
    height: 40px;
}

.tray-up {
    margin-left: 17px;
}

.tray-meet {
    margin-left: 12px;
}

.tray-i {
    margin-left: 8.500px;
}

.tray-globe {
    margin-left: 7px;
}

.tray-lang {
    margin-left: 8.500px;
}

.clock {
    width: 80px;
    margin-left: 2px;
    display: flex;
    flex-direction: column;
    align-items: center;
    line-height: 20px;
}

.notif {
    position: relative;
    width: 48px;
    height: 40px;
    padding: 10px 0 0 7px;
}

.notif-n {
    position: absolute;
    left: 14px;
    top: 20px;
    width: 16px;
    height: 16px;
    border: 1px solid #bbb;
    border-radius: 50%;
    background: #1a252e;
    font-size: 10px;
    line-height: 14px;
    text-align: center;
}

/* video player lying over the recording */
.player {
    position: absolute;
    left: 0;
    right: 0;
    top: 405px;
    height: 323px;
    display: flex;
    flex-direction: column;
    justify-content: flex-end;
    color: #fff;
    background: linear-gradient(rgba(0, 0, 0, 0) 0, rgba(0, 0, 0, .1) 30px, rgba(0, 0, 0, .33) 85px, rgba(0, 0, 0, .47) 135px, rgba(0, 0, 0, .57) 195px, rgba(0, 0, 0, .6) 255px);
}

.player-title {
    height: 44px;
    margin: 0 0 42px 21px;
    font-size: 31.700px;
    font-weight: 300;
    line-height: 44px;
}

.progress {
    position: relative;
    height: 2px;
    margin: 9px 24px 9px;
    background: #8a8a8a;
}

.progress-fill {
    position: absolute;
    top: -1px;
    left: 0;
    height: 4px;
    background: #5ccbf0;
}

.progress-knob {
    position: absolute;
    top: -9px;
    width: 20px;
    height: 20px;
    border: 2px solid #5ccbf0;
    border-radius: 50%;
    background: #6a6a6a;
}

.times {
    height: 14px;
    margin: 4px 25px 0 24px;
    display: flex;
    justify-content: space-between;
    font-size: 11.200px;
    line-height: 14px;
}

.controls {
    height: 66px;
    padding: 0 24px 12px;
    display: flex;
}

.ctl-group {
    display: flex;
}

.ctl-mid {
    margin-left: 484px;
}

.ctl-right {
    margin-left: auto;
}

.ctl {
    width: 50px;
    display: flex;
    flex-direction: column;
    align-items: center;
    justify-content: center;
}

.ctl-num {
    margin-top: -2px;
    font-size: 12px;
    line-height: 12px;
}

.cursor {
    position: absolute;
    left: 312px;
    top: 483px;
}
```
